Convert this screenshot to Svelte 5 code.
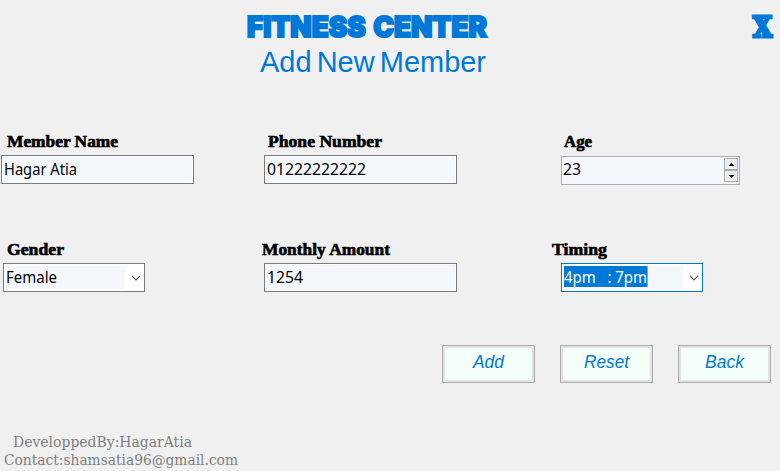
<script>
  let name = $state('Hagar Atia');
  let phone = $state('01222222222');
  let amount = $state('1254');
  let age = $state(23);
</script>

{#snippet text(value, width, height, base, kind)}
  <svg class="text {kind}" {width} {height} role="img" aria-label={value}>
    <text x="0" y={base} textLength={width} lengthAdjust="spacingAndGlyphs">{value}</text>
  </svg>
{/snippet}

{#snippet chevron()}
  <svg class="chevron" width="10" height="6" viewBox="0 0 10 6"><path d="M1 .8 5 4.8 9 .8" /></svg>
{/snippet}

<main>
  <header>
    <div class="titles">
      {@render text('FITNESS CENTER', 240, 44, 37, 'brand')}
      <div class="sub">{@render text('Add New Member', 226, 38, 28, 'heading')}</div>
    </div>
    <div class="close">{@render text('X', 19, 44, 37, 'brand cross')}</div>
  </header>

  <form>
    <section class="row">
      <div class="col a">
        <div class="lab m7">{@render text('Member Name', 111, 22, 14, 'label')}</div>
        <div class="box wide m1">{@render text(name, 73, 27, 19, 'value')}</div>
      </div>
      <div class="col b">
        <div class="lab m8">{@render text('Phone Number', 114, 22, 14, 'label')}</div>
        <div class="box wide m4">{@render text(phone, 99, 27, 19, 'value')}</div>
      </div>
      <div class="col c">
        <div class="lab m14">{@render text('Age', 28, 22, 14, 'label')}</div>
        <div class="box number">
          {@render text(String(age), 18, 27, 18, 'value')}
          <div class="spin">
            <button type="button" aria-label="Increase" onclick={() => age++}>
              <svg width="5" height="3"><path d="M2 0h1v1h1v1h1v1H0V2h1V1h1z" /></svg>
            </button>
            <button type="button" aria-label="Decrease" onclick={() => age--}>
              <svg width="5" height="3"><path d="M0 0h5v1H4v1H3v1H2V2H1V1H0z" /></svg>
            </button>
          </div>
        </div>
      </div>
    </section>

    <section class="row">
      <div class="col a">
        <div class="lab m7">{@render text('Gender', 57, 22, 14, 'label')}</div>
        <div class="box combo m3">
          <div class="inner">{@render text('Female', 51, 23, 17, 'value')}</div>
          {@render chevron()}
        </div>
      </div>
      <div class="col b">
        <div class="lab m2">{@render text('Monthly Amount', 128, 22, 14, 'label')}</div>
        <div class="box wide m4">{@render text(amount, 36, 27, 19, 'value')}</div>
      </div>
      <div class="col c">
        <div class="lab m2">{@render text('Timing', 55, 22, 14, 'label')}</div>
        <div class="box combo focus m11">
          <div class="inner">
            <div class="selected">{@render text('4pm\u00a0\u00a0\u00a0: 7pm', 83, 21, 17, 'value')}</div>
          </div>
          {@render chevron()}
        </div>
      </div>
    </section>

    <div class="actions">
      <button type="button">{@render text('Add', 31, 28, 19, 'action')}</button>
      <button type="button">{@render text('Reset', 45, 28, 19, 'action')}</button>
      <button type="button">{@render text('Back', 39, 28, 19, 'action')}</button>
    </div>
  </form>

  <footer>
    <div class="by">{@render text('DeveloppedBy:HagarAtia', 179, 18, 13, 'credit')}</div>
    <div>{@render text('Contact:shamsatia96@gmail.com', 234, 18, 13, 'credit')}</div>
  </footer>
</main>

<style>
  :global(body) { background: #f0f0f0; }
  main {
    box-sizing: border-box;
    width: 780px;
    height: 471px;
    overflow: hidden;
    background: #f0f0f0;
    display: flex;
    flex-direction: column;
  }
  svg { display: block; flex: none; }
  .text { overflow: visible; }
  .text text { white-space: pre; }
  .brand {
    font: 900 28px Inter, sans-serif;
    word-spacing: 2px;
    fill: #0078d7;
    stroke: #0078d7;
    stroke-width: 2px;
  }
  .cross { font: bold 27px "DejaVu Serif", serif; stroke-width: 3px; }
  .heading { font: 30px "Liberation Sans", sans-serif; word-spacing: -3px; fill: #0078d7; }
  .label {
    font: bold 16.5px "Liberation Serif", serif;
    fill: #000;
    stroke: #000;
    stroke-width: .6px;
  }
  .value { font: 16px "Noto Sans", sans-serif; fill: #000; }
  .action { font: italic 17.5px "Liberation Sans", sans-serif; fill: #0078d7; }
  .credit { font: 14.5px "DejaVu Serif", serif; fill: #808080; }

  header { display: flex; height: 133px; padding-left: 247px; }
  .titles { width: 506px; }
  .sub { padding-left: 13px; }

  .row { display: flex; height: 108px; }
  .col.a { width: 260px; }
  .col.b { width: 290px; }
  .lab { height: 22px; }
  .m1 { margin-left: 1px; }
  .m2 { margin-left: 2px; }
  .m3 { margin-left: 3px; }
  .m4 { margin-left: 4px; }
  .m7 { margin-left: 7px; }
  .m8 { margin-left: 8px; }
  .m11 { margin-left: 11px; }
  .m14 { margin-left: 14px; }
  .box {
    box-sizing: border-box;
    display: flex;
    height: 29px;
    border: 1px solid #7a7a7a;
    background: #f4f8fd;
    box-shadow: inset 0 0 0 1px #fff;
  }
  .wide { width: 193px; padding-left: 2px; }
  .number {
    width: 179px;
    margin: 1px 0 0 11px;
    padding: 0 1px;
    border-color: #abadb3;
    box-shadow: none;
    justify-content: space-between;
  }
  .spin { display: flex; flex-direction: column; margin-top: 1px; }
  .spin button {
    box-sizing: border-box;
    display: flex;
    align-items: center;
    justify-content: center;
    width: 14px;
    height: 12px;
    padding: 0;
    border: 1px solid #acacac;
    background: #ededed;
  }
  .combo {
    width: 142px;
    padding: 2px 3px 2px 2px;
    background: #fff;
    align-items: center;
    justify-content: space-between;
  }
  .inner { width: 119px; height: 23px; background: #f4f8fd; }
  .focus { border-color: #0078d7; }
  .selected { width: 83px; height: 21px; background: #0078d7; border-right: 1px solid #ff8728; }
  .selected > .text { fill: #fff; }
  .chevron path { fill: none; stroke: #555; stroke-width: 1.2; }

  .actions { display: flex; gap: 25px; padding-left: 442px; margin-top: -4px; }
  .actions button {
    box-sizing: border-box;
    display: flex;
    justify-content: center;
    width: 93px;
    height: 38px;
    padding: 3px 0;
    border: 1px solid #adadad;
    background: #f5fffa;
    box-shadow: inset 0 0 0 2px #e1e1e1;
  }
  footer { padding: 51px 0 0 4px; }
  .by { padding-left: 9px; }
</style>
